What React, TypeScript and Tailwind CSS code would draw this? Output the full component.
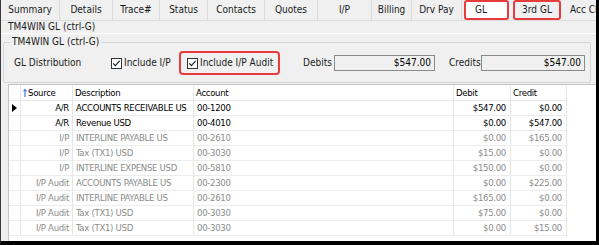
type Tab = { label: string; className: string; kind?: "active" | "marked" };

const tabs: Tab[] = [
  { label: "Summary", className: "w-[59px]" },
  { label: "Details", className: "w-[53px]" },
  { label: "Trace#", className: "w-[47px]" },
  { label: "Status", className: "w-[48px]" },
  { label: "Contacts", className: "w-[57px]" },
  { label: "Quotes", className: "w-[53px]" },
  { label: "I/P", className: "w-[54px]" },
  { label: "Billing", className: "w-[40px]" },
  { label: "Drv Pay", className: "w-[50px]" },
  { label: "GL", className: "w-[49px]", kind: "active" },
  { label: "3rd GL", className: "w-[52px]", kind: "marked" },
];

type Row = {
  source: string;
  description: string;
  account: string;
  debit: string;
  credit: string;
  current?: boolean;
};

const rows: Row[] = [
  { source: "A/R", description: "ACCOUNTS RECEIVABLE US", account: "00-1200", debit: "$547.00", credit: "$0.00", current: true },
  { source: "A/R", description: "Revenue USD", account: "00-4010", debit: "$0.00", credit: "$547.00", current: true },
  { source: "I/P", description: "INTERLINE PAYABLE US", account: "00-2610", debit: "$0.00", credit: "$165.00" },
  { source: "I/P", description: "Tax (TX1) USD", account: "00-3030", debit: "$15.00", credit: "$0.00" },
  { source: "I/P", description: "INTERLINE EXPENSE USD", account: "00-5810", debit: "$150.00", credit: "$0.00" },
  { source: "I/P Audit", description: "ACCOUNTS PAYABLE US", account: "00-2300", debit: "$0.00", credit: "$225.00" },
  { source: "I/P Audit", description: "INTERLINE PAYABLE US", account: "00-2610", debit: "$165.00", credit: "$0.00" },
  { source: "I/P Audit", description: "Tax (TX1) USD", account: "00-3030", debit: "$75.00", credit: "$0.00" },
  { source: "I/P Audit", description: "Tax (TX1) USD", account: "00-3030", debit: "$0.00", credit: "$15.00" },
];

function CheckBox() {
  return (
    <svg width="11" height="11" viewBox="0 0 11 11" className="shrink-0">
      <rect x="0.5" y="0.5" width="10" height="10" fill="#fff" stroke="#333" />
      <path d="M2.3 5.4 L4.4 7.6 L8.6 2.9" fill="none" stroke="#222" strokeWidth="1.2" />
    </svg>
  );
}

function AmountBox({ value, className }: { value: string; className: string }) {
  return (
    <div className={`h-[16px] border border-[#8a8a8a] bg-[#f0f0f0] flex items-center justify-end pr-[3px] text-black ${className}`}>
      {value}
    </div>
  );
}

export default function App() {
  return (
    <div className="w-[599px] h-[245px] flex flex-col bg-[#f0f0f0] border-l border-l-[#3a3a3a] border-r-[3px] border-r-black border-b-4 border-b-black text-[10px] leading-[12px] text-[#1a1a1a] font-['DejaVu_Sans_Condensed','Liberation_Sans',sans-serif] overflow-hidden">
      {/* tab strip */}
      <div className="h-[21px] shrink-0 flex border-b border-[#dcdcdc]">
        {tabs.map((t) =>
          t.kind ? (
            <div key={t.label} className={`${t.className} h-full flex items-start px-[2px]`}>
              <div
                className={`w-full h-[20px] border-2 border-[#e63c3c] rounded-[3px] flex items-center ${
                  t.kind === "active" ? "bg-white pl-[9px]" : "justify-center"
                }`}
              >
                {t.label}
              </div>
            </div>
          ) : (
            <div key={t.label} className={`${t.className} h-full flex items-center justify-center border-r border-[#dadada]`}>
              {t.label}
            </div>
          )
        )}
        <div className="flex-1 h-full flex items-center pl-[7px] whitespace-nowrap overflow-hidden">Acc Cl</div>
      </div>

      {/* header line */}
      <div className="h-[13px] shrink-0 flex items-center pl-[7px] border-b border-white">TM4WIN GL (ctrl-G)</div>

      {/* group box */}
      <fieldset className="mt-[2px] ml-[2px] w-[588px] h-[47px] shrink-0 border border-[#d4d4d4] rounded-[2px]">
        <legend className="ml-[6px] px-[2px] leading-[12px]">TM4WIN GL (ctrl-G)</legend>
        <div className="h-[30px] flex items-center pl-[10px]">
          <div className="w-[97px]">GL Distribution</div>
          <div className="w-[68px] flex items-center gap-[2px]">
            <CheckBox />
            <span>Include I/P</span>
          </div>
          <div className="w-[101px] h-[24px] border-2 border-[#e63c3c] rounded-[4px] flex items-center gap-[2px] pl-[6px]">
            <CheckBox />
            <span>Include I/P Audit</span>
          </div>
          <div className="ml-[23px] w-[31px]">Debits</div>
          <AmountBox value="$547.00" className="w-[101px]" />
          <div className="ml-[14px] w-[32px]">Credits</div>
          <AmountBox value="$547.00" className="w-[104px]" />
        </div>
      </fieldset>

      {/* grid */}
      <div className="mt-[1px] ml-[7px] flex-1 bg-white border-l border-t border-[#c4c4c4] text-[9.5px] tracking-[-0.3px]">
        <div className="w-[558px] h-[16px] flex border-b border-[#e6e6e6] text-black">
          <div className="w-[12px] border-r border-[#e6e6e6]" />
          <div className="w-[52px] border-r border-[#e6e6e6] flex items-center pl-[2px] gap-[1px]">
            <svg width="4" height="8" viewBox="0 0 4 8" className="shrink-0">
              <path d="M2 0.5 L2 8 M0.3 2.4 L2 0.5 L3.7 2.4" fill="none" stroke="#1f4fd8" strokeWidth="1" />
            </svg>
            <span>Source</span>
          </div>
          <div className="w-[121px] border-r border-[#e6e6e6] flex items-center pl-[2px]">Description</div>
          <div className="w-[260px] border-r border-[#e6e6e6] flex items-center pl-[2px]">Account</div>
          <div className="w-[57px] border-r border-[#e6e6e6] flex items-center pl-[2px]">Debit</div>
          <div className="w-[56px] border-r border-[#e6e6e6] flex items-center pl-[2px]">Credit</div>
        </div>
        {rows.map((r, i) => (
          <div
            key={i}
            className={`w-[558px] h-[15px] flex border-b border-[#ececec] whitespace-nowrap ${
              r.current ? "text-black" : "text-[#8c8c8c]"
            }`}
          >
            <div className="w-[12px] border-r border-[#e6e6e6] flex items-center justify-center">
              {i === 0 && (
                <svg width="5" height="8" viewBox="0 0 5 8">
                  <path d="M0 0 L5 4 L0 8 Z" fill="#000" />
                </svg>
              )}
            </div>
            <div className="w-[52px] border-r border-[#e6e6e6] flex items-center justify-end pr-[3px]">{r.source}</div>
            <div className="w-[121px] border-r border-[#e6e6e6] flex items-center pl-[3px] overflow-hidden">{r.description}</div>
            <div className="w-[260px] border-r border-[#e6e6e6] flex items-center pl-[3px]">{r.account}</div>
            <div className="w-[57px] border-r border-[#e6e6e6] flex items-center justify-end pr-[4px]">{r.debit}</div>
            <div className="w-[56px] border-r border-[#e6e6e6] flex items-center justify-end pr-[4px]">{r.credit}</div>
          </div>
        ))}
      </div>
    </div>
  );
}
